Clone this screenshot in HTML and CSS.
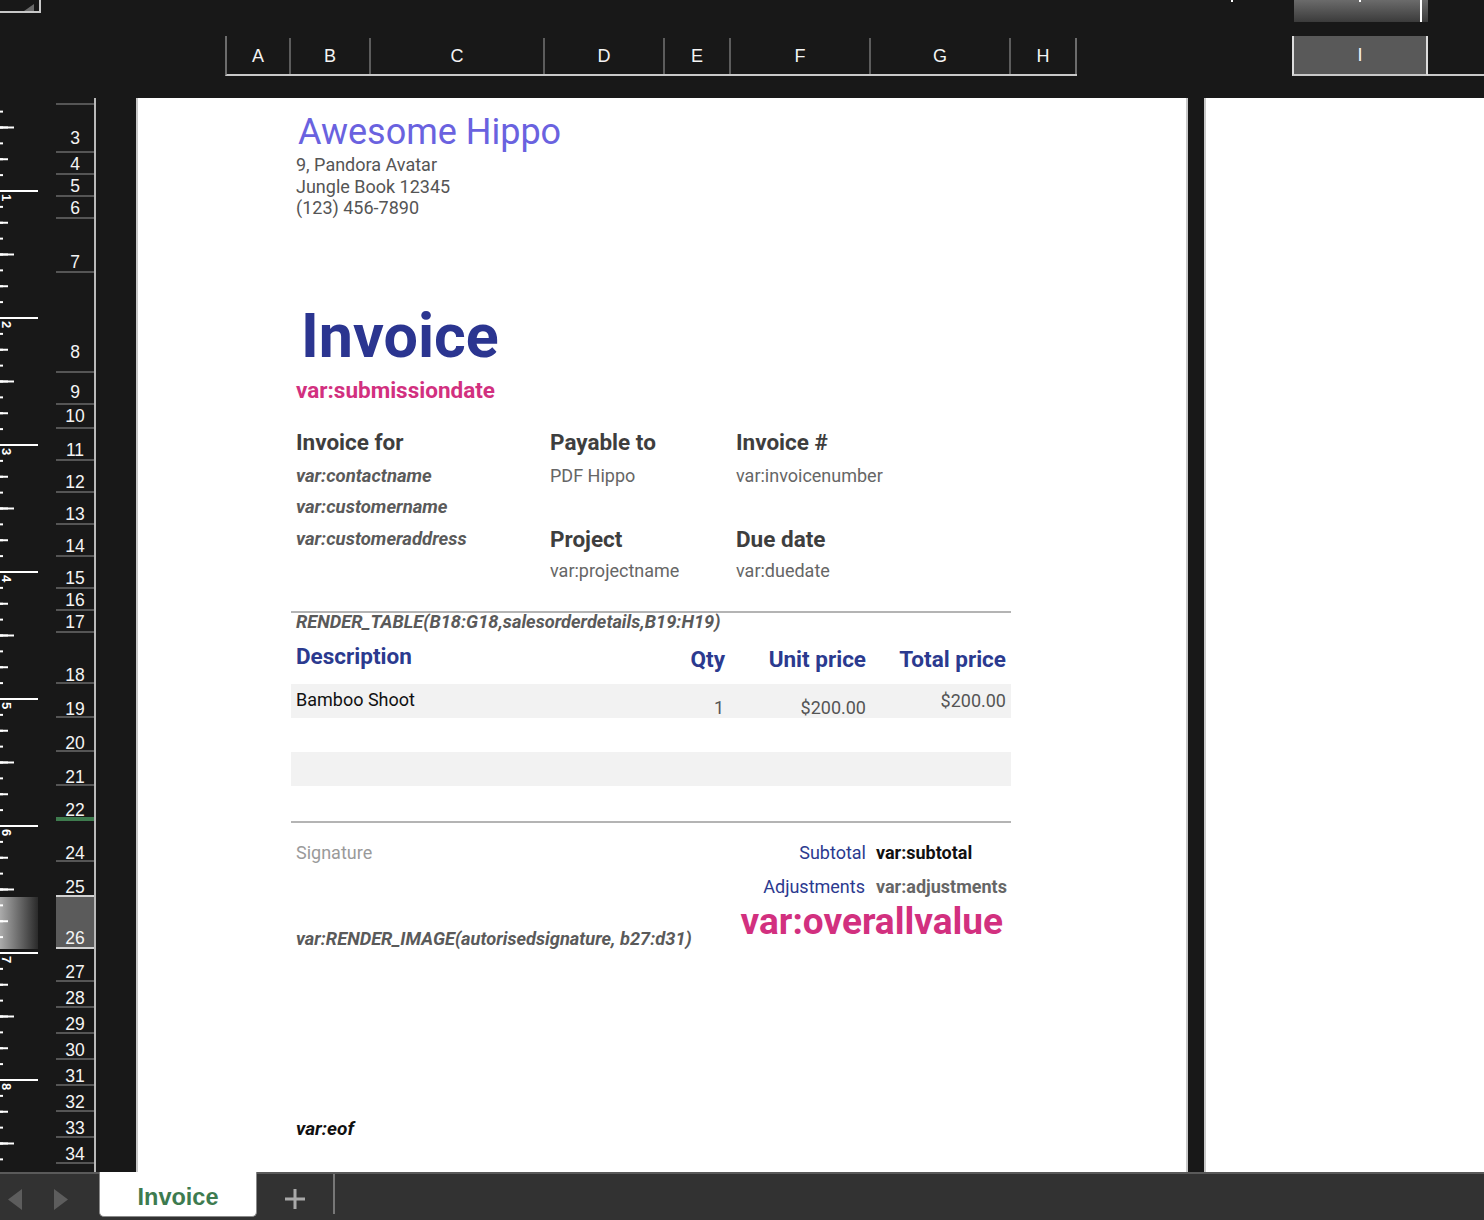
FILE: index.html
```html
<!DOCTYPE html>
<html lang="en">
<head>
<meta charset="utf-8">
<title>Invoice</title>
<link rel="stylesheet" href="styles.css">
</head>
<body>
<div class="app">
  <header class="topbar">
    <div class="corner">
      <svg class="corner-tri" width="10" height="7" viewBox="0 0 10 7"><polygon points="10,0 10,7 0,7" fill="#6a6a6a"/></svg>
    </div>
    <div class="hr-gap"><span class="hr-tick"></span></div>
    <div class="hr-sel"></div>
    <div class="colheads">
      <div class="ch ch-a">A</div>
      <div class="ch ch-b">B</div>
      <div class="ch ch-c">C</div>
      <div class="ch ch-d">D</div>
      <div class="ch ch-e">E</div>
      <div class="ch ch-f">F</div>
      <div class="ch ch-g">G</div>
      <div class="ch ch-h">H</div>
    </div>
    <div class="ch-i">I</div>
    <div class="ch-rest"></div>
  </header>

  <main class="main">
    <div class="ruler">
      <div class="inches">
        <div class="inch"></div>
        <div class="inch"><span class="inch-label">1</span></div>
        <div class="inch"><span class="inch-label">2</span></div>
        <div class="inch"><span class="inch-label">3</span></div>
        <div class="inch"><span class="inch-label">4</span></div>
        <div class="inch"><span class="inch-label">5</span></div>
        <div class="inch"><span class="inch-label">6</span></div>
        <div class="inch"><span class="inch-label">7</span></div>
        <div class="inch"><span class="inch-label">8</span></div>
      </div>
    </div>

    <div class="rowheads">
      <div class="rh"></div>
      <div class="rh rh-lift6">3</div>
      <div class="rh">4</div>
      <div class="rh">5</div>
      <div class="rh">6</div>
      <div class="rh">7</div>
      <div class="rh rh-lift12">8</div>
      <div class="rh rh-lift4">9</div>
      <div class="rh rh-lift4">10</div>
      <div class="rh">11</div>
      <div class="rh">12</div>
      <div class="rh">13</div>
      <div class="rh">14</div>
      <div class="rh">15</div>
      <div class="rh">16</div>
      <div class="rh">17</div>
      <div class="rh rh-flat">18</div>
      <div class="rh rh-flat">19</div>
      <div class="rh rh-flat">20</div>
      <div class="rh rh-flat">21</div>
      <div class="rh rh-mark">22</div>
      <div class="rh rh-flat">24</div>
      <div class="rh rh-pre">25</div>
      <div class="rh rh-sel">26</div>
      <div class="rh rh-low">27</div>
      <div class="rh rh-low">28</div>
      <div class="rh rh-low">29</div>
      <div class="rh rh-low">30</div>
      <div class="rh rh-low">31</div>
      <div class="rh rh-low">32</div>
      <div class="rh rh-low">33</div>
      <div class="rh rh-low">34</div>
      <div class="rh rh-end"></div>
    </div>

    <div class="page">
      <div class="rule rule-top"></div>
      <div class="rule rule-bottom"></div>
      <div class="band band-1"></div>
      <div class="band band-2"></div>

      <div class="cell company">Awesome Hippo</div>
      <div class="cell address">9, Pandora Avatar<br>Jungle Book 12345<br>(123) 456-7890</div>
      <div class="cell title">Invoice</div>
      <div class="cell subdate">var:submissiondate</div>

      <div class="cell label lbl-for">Invoice for</div>
      <div class="cell label lbl-pay">Payable to</div>
      <div class="cell label lbl-inv">Invoice #</div>

      <div class="cell var v-contact">var:contactname</div>
      <div class="cell val v-payee">PDF Hippo</div>
      <div class="cell val v-invno">var:invoicenumber</div>
      <div class="cell var v-customer">var:customername</div>
      <div class="cell var v-address">var:customeraddress</div>
      <div class="cell label lbl-project">Project</div>
      <div class="cell label lbl-due">Due date</div>
      <div class="cell val v-project">var:projectname</div>
      <div class="cell val v-due">var:duedate</div>

      <div class="cell var render-table">RENDER_TABLE(B18:G18,salesorderdetails,B19:H19)</div>
      <div class="cell th th-desc">Description</div>
      <div class="cell th th-qty">Qty</div>
      <div class="cell th th-unit">Unit price</div>
      <div class="cell th th-total">Total price</div>

      <div class="cell td td-desc">Bamboo Shoot</div>
      <div class="cell td td-qty">1</div>
      <div class="cell td td-unit">$200.00</div>
      <div class="cell td td-total">$200.00</div>

      <div class="cell sig">Signature</div>
      <div class="cell sum-label sub-l">Subtotal</div>
      <div class="cell sub-v">var:subtotal</div>
      <div class="cell sum-label adj-l">Adjustments</div>
      <div class="cell adj-v">var:adjustments</div>
      <div class="cell overall">var:overallvalue</div>
      <div class="cell var render-image">var:RENDER_IMAGE(autorisedsignature, b27:d31)</div>
      <div class="cell var eof">var:eof</div>
    </div>

    <div class="page2"></div>
  </main>

  <footer class="sheetbar">
    <div class="nav">
      <svg width="99" height="46" viewBox="0 0 99 46">
        <polygon points="22,15 22,36 8,25.5" fill="#5d5d5d"/>
        <polygon points="54,15 54,36 68,25.5" fill="#5d5d5d"/>
      </svg>
    </div>
    <div class="tab">Invoice</div>
    <div class="add">
      <svg width="20" height="20" viewBox="0 0 20 20">
        <rect x="0" y="8.5" width="20" height="3" fill="#a9a9a9"/>
        <rect x="8.5" y="0" width="3" height="20" fill="#a9a9a9"/>
      </svg>
    </div>
    <div class="sep"></div>
  </footer>
</div>
</body>
</html>
```
FILE: styles.css
```css
html, body {
  margin: 0;
  padding: 0;
  background: #181818;
}
body {
  width: 1484px;
  height: 1220px;
  overflow: hidden;
  font-family: "Liberation Sans", Arial, sans-serif;
}
.app {
  display: flex;
  flex-direction: column;
  width: 1484px;
  height: 1220px;
}

/* ---------- top bar ---------- */
.topbar {
  flex: none;
  height: 98px;
  display: grid;
  grid-template-columns: 225px 852px 215px 136px 1fr;
  grid-template-rows: 22px 14px 40px 22px;
}
.corner {
  grid-row: 1 / 3;
  grid-column: 1;
  align-self: start;
  box-sizing: border-box;
  width: 41px;
  height: 13px;
  border-right: 2px solid #c8c8c8;
  border-bottom: 2px solid #c8c8c8;
  display: flex;
  justify-content: flex-end;
  align-items: flex-end;
  padding-right: 5px;
}
.corner-tri { display: block; }
.hr-gap {
  grid-row: 1;
  grid-column: 3;
}
.hr-tick {
  display: block;
  width: 2px;
  height: 2px;
  margin-left: 154px;
  background: #fff;
}
.hr-sel {
  grid-row: 1;
  grid-column: 4;
  margin-left: 2px;
  background:
    linear-gradient(#fff, #fff) 65px 0 / 2px 2px no-repeat,
    linear-gradient(#fff, #fff) 126px 0 / 2px 22px no-repeat,
    linear-gradient(to bottom, #6b6b6b, #3b3b3b);
}
.colheads {
  grid-row: 3;
  grid-column: 2;
  display: flex;
  box-sizing: border-box;
  height: 40px;
  border-left: 2px solid #6c6c6c;
  border-bottom: 2px solid #c8c8c8;
}
.ch {
  box-sizing: border-box;
  flex: none;
  height: 36px;
  margin-top: 2px;
  border-right: 2px solid #5c5c5c;
  color: #f4f4f4;
  font-size: 18px;
  line-height: 36px;
  text-align: center;
}
.ch-a { width: 64px; }
.ch-b { width: 80px; }
.ch-c { width: 174px; }
.ch-d { width: 120px; }
.ch-e { width: 66px; }
.ch-f { width: 140px; }
.ch-g { width: 140px; }
.ch-h { width: 66px; border-right-color: #6c6c6c; }
.ch-i {
  grid-row: 3;
  grid-column: 4;
  box-sizing: border-box;
  height: 40px;
  background: #595959;
  border-left: 2px solid #dcdcdc;
  border-right: 2px solid #dcdcdc;
  border-bottom: 2px solid #c8c8c8;
  color: #f4f4f4;
  font-size: 18px;
  line-height: 38px;
  text-align: center;
}
.ch-rest {
  grid-row: 3;
  grid-column: 5;
  box-sizing: border-box;
  height: 40px;
  border-bottom: 2px solid #c8c8c8;
}

/* ---------- main ---------- */
.main {
  --rows: 7px 48px 22px 22px 22px 54px 100px 32px 24px 32px 32px 32px 32px 32px 22px 22px 51px 34px 34px 34px 35px 41px 35px 52px 33px 26px 26px 26px 26px 26px 26px 26px 1fr;
  flex: none;
  height: 1074px;
  display: flex;
}

.ruler {
  flex: none;
  width: 38px;
  overflow: hidden;
  background:
    linear-gradient(to bottom, #fff 0 2px, transparent 2px) 0 92px / 38px 127px repeat-y,
    linear-gradient(to bottom, #fff 0 2px, transparent 2px) 0 28.5px / 14px 63.5px repeat-y,
    linear-gradient(to bottom, #fff 0 2px, transparent 2px) 0 28.5px / 8px 31.75px repeat-y,
    linear-gradient(to bottom, #fff 0 2px, transparent 2px) 0 12.625px / 3px 15.875px repeat-y,
    linear-gradient(to right, #ababab, #2a2a2a) 0 799px / 38px 52px no-repeat,
    #181818;
}
.inches {
  display: flex;
  flex-direction: column;
  margin-top: -35px;
}
.inch {
  flex: none;
  height: 127px;
  box-sizing: border-box;
  padding-top: 4px;
  padding-left: 1px;
}
.inch-label {
  display: block;
  writing-mode: vertical-rl;
  font-size: 13px;
  font-weight: 700;
  line-height: 11px;
  color: #fff;
}

.rowheads {
  flex: none;
  margin-left: 18px;
  width: 40px;
  box-sizing: border-box;
  border-right: 2px solid #b9b9b9;
  display: grid;
  grid-template-rows: var(--rows);
}
.rh {
  box-sizing: border-box;
  border-bottom: 2px solid #555;
  display: flex;
  align-items: flex-end;
  justify-content: center;
  padding-bottom: 2px;
  color: #f4f4f4;
  font-size: 17.5px;
  line-height: 14px;
  overflow: hidden;
}
.rh-lift6 { padding-bottom: 6px; }
.rh-lift12 { padding-bottom: 12px; }
.rh-lift4 { padding-bottom: 4px; }
.rh-flat { padding-bottom: 0; }
.rh-low { padding-bottom: 1px; }
.rh-mark { border-bottom: 4px solid #3e7b4e; padding-bottom: 0; }
.rh-pre { border-bottom-color: #d2d2d2; padding-bottom: 1px; }
.rh-sel { background: #5b5b5b; border-bottom-color: #d2d2d2; padding-bottom: 2px; }
.rh-end { border-bottom: none; }

/* ---------- page ---------- */
.page {
  flex: none;
  margin-left: 40px;
  width: 1052px;
  box-sizing: border-box;
  border-left: 2px solid #c8c8c8;
  border-right: 2px solid #c8c8c8;
  background: #fff;
  display: grid;
  grid-template-columns: 87px 66px 80px 174px 120px 66px 140px 140px 65px 1fr;
  grid-template-rows: var(--rows);
  font-family: Roboto, "Noto Sans", sans-serif;
}
.page2 {
  flex: 1;
  margin-left: 16px;
  border-left: 2px solid #c8c8c8;
  background: #fff;
}

.rule {
  grid-column: 3 / 9;
  align-self: start;
  height: 2px;
  background: #b4b4b4;
}
.rule-top { grid-row: 16; }
.rule-bottom { grid-row: 22; }
.band {
  grid-column: 3 / 9;
  background: #f2f2f2;
}
.band-1 { grid-row: 18; }
.band-2 { grid-row: 20; }

.cell {
  align-self: end;
  padding: 0 5px;
  line-height: 1;
  white-space: nowrap;
}
.company {
  grid-row: 2;
  grid-column: 3 / 9;
  font-size: 36px;
  color: #6a62df;
  padding-left: 7px;
  padding-bottom: 3px;
}
.address {
  grid-row: 3 / 6;
  grid-column: 3 / 7;
  align-self: start;
  padding-top: 1px;
  font-size: 18px;
  line-height: 21.5px;
  color: #555;
}
.title {
  grid-row: 7;
  grid-column: 3 / 8;
  font-size: 61px;
  font-weight: 700;
  color: #2b3590;
  padding-left: 10px;
  padding-bottom: 6px;
}
.subdate {
  grid-row: 8;
  grid-column: 3 / 8;
  font-size: 22.5px;
  font-weight: 700;
  color: #d2307f;
  padding-bottom: 3.5px;
}
.label {
  font-size: 22.5px;
  font-weight: 700;
  color: #3e3e3e;
}
.var {
  font-size: 18.5px;
  font-style: italic;
  font-weight: 700;
  color: #5a5a5a;
}
.val {
  font-size: 18px;
  color: #666;
}
.lbl-for { grid-row: 10; grid-column: 3 / 5; padding-bottom: 8px; }
.lbl-pay { grid-row: 10; grid-column: 5 / 7; padding-bottom: 8px; }
.lbl-inv { grid-row: 10; grid-column: 7 / 9; padding-bottom: 8px; }
.v-contact { grid-row: 11; grid-column: 3 / 5; padding-bottom: 8px; }
.v-payee { grid-row: 11; grid-column: 5 / 7; padding-bottom: 8.5px; }
.v-invno { grid-row: 11; grid-column: 7 / 9; padding-bottom: 8px; }
.v-customer { grid-row: 12; grid-column: 3 / 5; padding-bottom: 8.5px; }
.v-address { grid-row: 13; grid-column: 3 / 5; padding-bottom: 8.5px; }
.lbl-project { grid-row: 13; grid-column: 5 / 7; padding-bottom: 7px; }
.lbl-due { grid-row: 13; grid-column: 7 / 9; padding-bottom: 7px; }
.v-project { grid-row: 14; grid-column: 5 / 7; padding-bottom: 9px; }
.v-due { grid-row: 14; grid-column: 7 / 9; padding-bottom: 9px; }

.render-table {
  grid-row: 16;
  grid-column: 3 / 9;
  font-size: 18.25px;
  padding-bottom: 1.5px;
}
.th {
  font-size: 22.5px;
  font-weight: 700;
  color: #2b3a8f;
}
.th-desc { grid-row: 17; grid-column: 3 / 5; padding-bottom: 16.5px; }
.th-qty { grid-row: 17; grid-column: 6 / 7; text-align: right; padding-right: 6px; padding-bottom: 14px; }
.th-unit { grid-row: 17; grid-column: 7 / 8; text-align: right; padding-bottom: 14px; }
.th-total { grid-row: 17; grid-column: 8 / 9; text-align: right; padding-bottom: 14px; }

.td {
  font-size: 18px;
  color: #555;
}
.td-desc { grid-row: 18; grid-column: 3 / 6; color: #111; padding-bottom: 9px; }
.td-qty { grid-row: 18; grid-column: 6 / 7; text-align: right; padding-right: 7px; padding-bottom: 1.5px; }
.td-unit { grid-row: 18; grid-column: 7 / 8; text-align: right; padding-bottom: 1.5px; }
.td-total { grid-row: 18; grid-column: 8 / 9; text-align: right; padding-bottom: 8.5px; }

.sig {
  grid-row: 22;
  grid-column: 3 / 5;
  font-size: 18px;
  color: #9a9a9a;
  padding-bottom: 0;
}
.sum-label {
  font-size: 18px;
  color: #2b3a8f;
  text-align: right;
}
.sub-l { grid-row: 22; grid-column: 7 / 8; padding-bottom: 0; }
.sub-v {
  grid-row: 22;
  grid-column: 8 / 9;
  font-size: 18px;
  font-weight: 700;
  color: #111;
  padding-bottom: 0;
}
.adj-l { grid-row: 23; grid-column: 7 / 8; padding-right: 6px; padding-bottom: 1px; }
.adj-v {
  grid-row: 23;
  grid-column: 8 / 10;
  font-size: 18px;
  font-weight: 700;
  color: #666;
  padding-bottom: 1px;
}
.overall {
  grid-row: 24;
  grid-column: 6 / 9;
  text-align: right;
  padding-right: 8px;
  padding-bottom: 9px;
  font-size: 37px;
  font-weight: 700;
  color: #d2307f;
}
.render-image {
  grid-row: 24;
  grid-column: 3 / 6;
  font-size: 18.25px;
  padding-bottom: 0.5px;
}
.eof {
  grid-row: 31;
  grid-column: 3 / 5;
  font-size: 19px;
  color: #111;
  padding-bottom: 0.5px;
}

/* ---------- sheet tabs ---------- */
.sheetbar {
  flex: none;
  height: 48px;
  box-sizing: border-box;
  border-top: 2px solid #5a5a5a;
  background: #323232;
  display: flex;
  align-items: flex-start;
}
.nav {
  flex: none;
  width: 99px;
  height: 46px;
}
.nav svg { display: block; }
.tab {
  flex: none;
  box-sizing: border-box;
  width: 158px;
  height: 45px;
  margin-top: -2px;
  padding-top: 7px;
  background: #fff;
  border: 1px solid #8a8a8a;
  border-top: none;
  border-radius: 0 0 5px 5px;
  display: flex;
  align-items: center;
  justify-content: center;
  font-size: 23.5px;
  font-weight: 700;
  color: #3d7b4f;
}
.add {
  flex: none;
  width: 76px;
  height: 46px;
  box-sizing: border-box;
  padding-top: 15px;
  display: flex;
  justify-content: center;
  align-items: flex-start;
}
.add svg { display: block; }
.sep {
  flex: none;
  width: 2px;
  height: 40px;
  background: #777;
}
```
